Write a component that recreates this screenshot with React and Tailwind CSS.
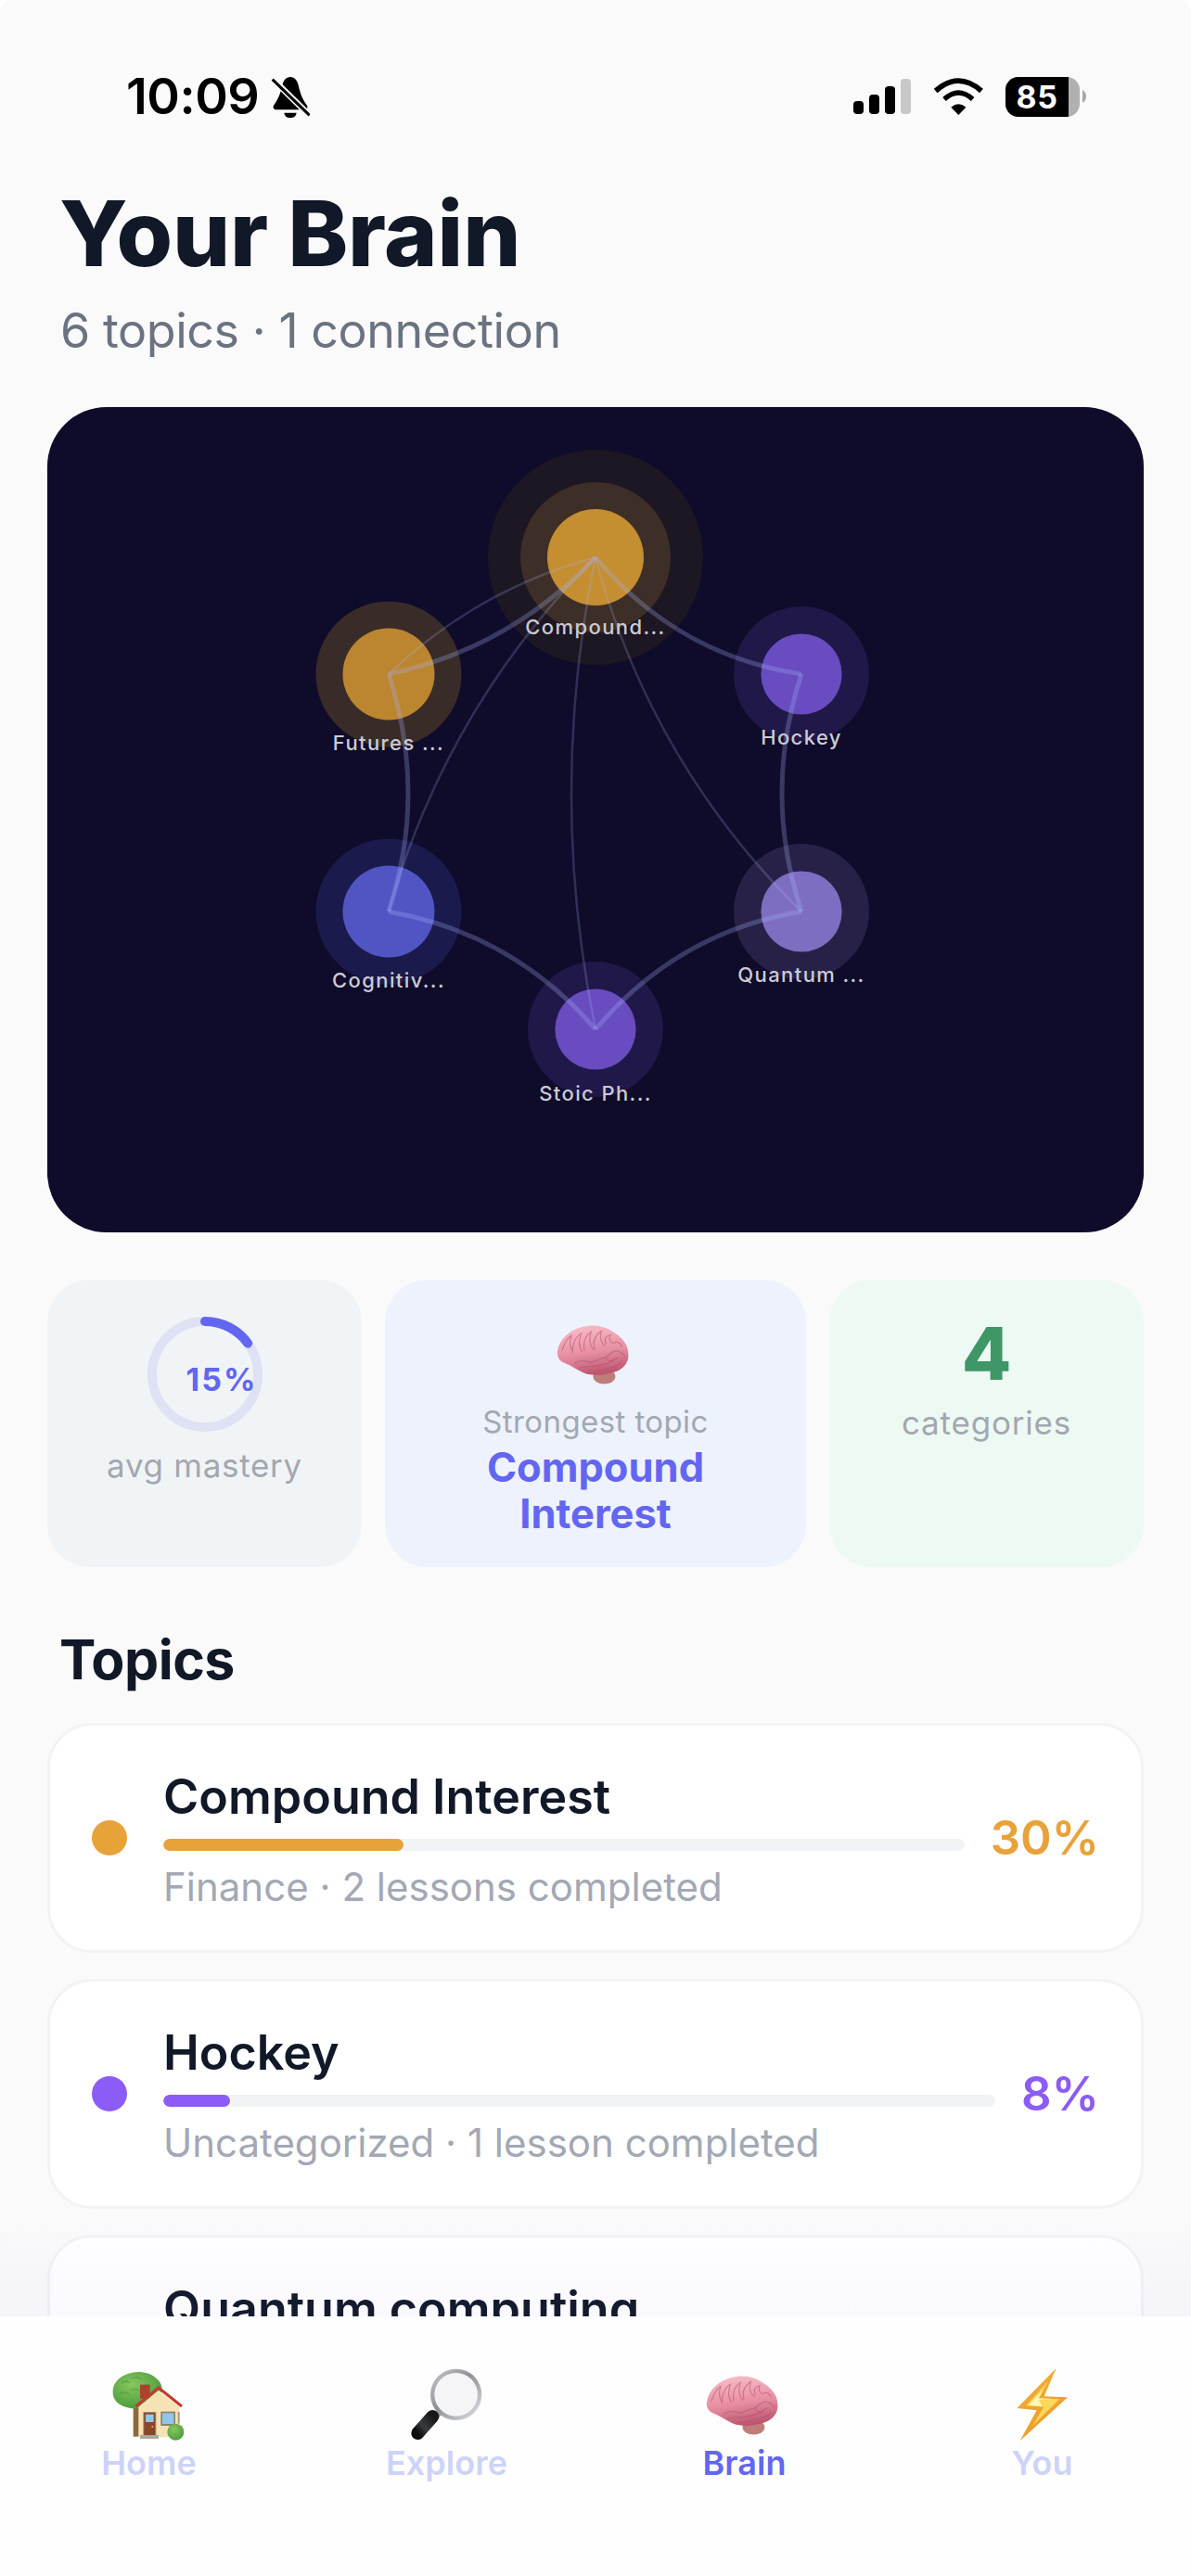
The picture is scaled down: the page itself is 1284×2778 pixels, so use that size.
import React from "react";

const NODES = [
  { x: 642, y: 601, r: 52, halo: 81, halo2: 116, fill: "#c48e31", haloFill: "#3d2f27", label: "Compound...", ly: 684 },
  { x: 419, y: 727, r: 49.5, halo: 78.5, fill: "#bc8630", haloFill: "#392c28", label: "Futures ...", ly: 809 },
  { x: 864, y: 727, r: 43.6, halo: 73, fill: "#684cc0", haloFill: "#201848", label: "Hockey", ly: 803 },
  { x: 419, y: 983, r: 49.5, halo: 78.5, fill: "#5155c4", haloFill: "#1b1a4c", label: "Cognitiv...", ly: 1065 },
  { x: 864, y: 983, r: 43.6, halo: 73, fill: "#7e6ec2", haloFill: "#282147", label: "Quantum ...", ly: 1059 },
  { x: 642, y: 1110, r: 43.6, halo: 73, fill: "#684cc0", haloFill: "#201848", label: "Stoic Ph...", ly: 1187 },
];

const THICK = [
  "M642 601 Q550 699 419 727",
  "M642 601 Q729 706 864 727",
  "M419 727 Q461 855 419 983",
  "M864 727 Q822 855 864 983",
  "M419 983 Q553 1007 642 1110",
  "M864 983 Q731 1005 642 1110",
];
const THIN = [
  "M642 601 Q514 636 419 727",
  "M642 601 Q480 765 419 983",
  "M642 601 Q590 856 642 1110",
  "M642 601 Q701 822 864 983",
];

const TOPICS = [
  { name: "Compound Interest", sub: "Finance · 2 lessons completed", pct: 30, color: "#e8a23a" },
  { name: "Hockey", sub: "Uncategorized · 1 lesson completed", pct: 8, color: "#8b5cf6" },
  { name: "Quantum computing", sub: "Uncategorized · 1 lesson completed", pct: 8, color: "#a78bfa" },
];

function Brain({ id, className }) {
  return (
    <svg viewBox="0 0 235 195" className={className}>
      <defs>
        <linearGradient id={id + "a"} x1="0.3" y1="0" x2="0.5" y2="1">
          <stop offset="0" stopColor="#f6bcc6" />
          <stop offset="0.55" stopColor="#e88fa3" />
          <stop offset="1" stopColor="#c95f78" />
        </linearGradient>
        <linearGradient id={id + "b"} x1="0.3" y1="0" x2="0.6" y2="1">
          <stop offset="0" stopColor="#ee9fb0" />
          <stop offset="1" stopColor="#b94f6b" />
        </linearGradient>
      </defs>
      <ellipse cx="155" cy="170" rx="36" ry="24" fill="#bd7d78" />
      <path d="M3 88C8 50 40 20 80 9C115 0 150 3 180 22C215 42 236 70 233 102C231 126 215 146 190 154C165 162 125 168 95 160C70 152 45 132 22 124C8 118 1 104 3 88Z" fill={`url(#${id}a)`} />
      <path d="M55 130C52 112 75 104 105 100C135 97 155 82 185 74C212 70 232 84 233 104C232 128 214 146 190 154C160 164 125 168 95 160C78 154 65 144 55 130Z" fill={`url(#${id}b)`} />
      <g fill="none" stroke="#b9506e" strokeOpacity="0.62" strokeWidth="3.2" strokeLinecap="round">
        <path d="M18 85C28 52 40 42 48 36C42 55 42 70 50 85" />
        <path d="M52 92C50 66 62 40 80 30C72 50 72 72 82 88" />
        <path d="M90 85C86 60 92 38 112 24C104 46 108 70 120 82" />
        <path d="M124 80C116 56 126 36 146 22C138 42 144 60 158 70" />
        <path d="M160 62C154 46 160 38 176 34C168 46 172 56 184 62" />
        <path d="M188 60C196 54 206 60 212 72" />
        <path d="M60 126C72 116 92 118 110 124C130 118 140 112 158 108C172 100 176 88 192 86C206 86 214 94 222 104" />
        <path d="M72 142C92 132 118 142 138 134C160 130 178 124 198 108" />
        <path d="M105 156C120 150 140 154 158 146C176 142 196 136 212 124" />
        <path d="M160 108C168 120 176 122 184 120" />
      </g>
    </svg>
  );
}

function HouseIcon() {
  return (
    <svg viewBox="45 24 240 240" className="w-[80px] h-[80px]">
      <defs>
        <radialGradient id="tree" cx="0.4" cy="0.35" r="0.7">
          <stop offset="0" stopColor="#86c760" />
          <stop offset="1" stopColor="#4a9a3a" />
        </radialGradient>
      </defs>
      <rect x="113" y="150" width="19" height="98" fill="#8a6a3a" />
      <path d="M47 100C49 68 75 52 95 45C125 33 168 39 188 60C208 76 213 100 192 125C170 148 130 162 100 155C68 150 45 132 47 100Z" fill="url(#tree)" />
      <g fill="none" stroke="#3d8430" strokeOpacity="0.6" strokeWidth="3">
        <path d="M75 75q15-12 28 0" />
        <path d="M110 60q18-10 30 4" />
        <path d="M70 110q16-12 30 2" />
        <path d="M105 100q14-12 28 0" />
        <path d="M145 85q14-8 24 4" />
      </g>
      <rect x="135" y="80" width="32" height="45" fill="#a8432f" />
      <path d="M130 152L195 98L262 152V250H130Z" fill="#f6e3b5" />
      <path d="M122 150L195 90L270 150" fill="none" stroke="#c23b2c" strokeWidth="9" />
      <rect x="145" y="168" width="42" height="76" fill="#9c8c6c" />
      <rect x="148" y="171" width="36" height="72" fill="#8b452b" />
      <rect x="153" y="176" width="26" height="25" fill="#8fc7ea" />
      <circle cx="175" cy="216" r="3" fill="#e7b548" />
      <rect x="202" y="167" width="47" height="46" fill="#8f806a" />
      <rect x="207" y="172" width="37" height="35" fill="#8fc7ea" />
      <rect x="257" y="168" width="6" height="38" fill="#a79d8b" />
      <rect x="135" y="243" width="60" height="12" fill="#aaa79f" />
      <circle cx="250" cy="233" r="27" fill="url(#tree)" />
    </svg>
  );
}

function LensIcon() {
  return (
    <svg viewBox="33 24 240 240" className="w-[80px] h-[80px]">
      <defs>
        <linearGradient id="rim" x1="0" y1="0" x2="1" y2="1">
          <stop offset="0" stopColor="#c9ccd3" />
          <stop offset="0.45" stopColor="#8f9095" />
          <stop offset="1" stopColor="#e4e7ef" />
        </linearGradient>
        <linearGradient id="handle" x1="1" y1="0" x2="0" y2="1">
          <stop offset="0" stopColor="#17181b" />
          <stop offset="0.6" stopColor="#3a3b40" />
          <stop offset="1" stopColor="#0d0d10" />
        </linearGradient>
      </defs>
      <path d="M115 170L130 182" stroke="#8f9095" strokeWidth="24" />
      <path d="M106 183L58 237" stroke="url(#handle)" strokeWidth="42" strokeLinecap="round" />
      <circle cx="182" cy="112" r="83" fill="url(#rim)" />
      <circle cx="182" cy="112" r="70" fill="#f5f5f8" />
    </svg>
  );
}

function BoltIcon() {
  return (
    <svg viewBox="39 24 240 240" className="w-[80px] h-[80px]">
      <defs>
        <linearGradient id="boltA" x1="0" y1="0" x2="0.5" y2="1">
          <stop offset="0" stopColor="#f3b23a" />
          <stop offset="1" stopColor="#ec9a28" />
        </linearGradient>
      </defs>
      <path d="M203 27L76 156L140 163L86 262L240 121L164 118Z" fill="url(#boltA)" />
      <path d="M176 70L106 148L162 152L126 214L214 127L148 124Z" fill="#ffd75a" />
      <path d="M158 100L112 146L158 150L146 128L196 127L146 124Z" fill="#fff6b8" />
    </svg>
  );
}

function Signal() {
  return (
    <svg width="62" height="38" viewBox="0 0 62 38">
      <rect x="0" y="24" width="11" height="14" rx="4" fill="#000" />
      <rect x="17" y="17" width="11" height="21" rx="4" fill="#000" />
      <rect x="34" y="8" width="11" height="30" rx="4" fill="#000" />
      <rect x="51" y="0" width="11" height="38" rx="4" fill="#c8c8c8" />
    </svg>
  );
}

function Wifi() {
  return (
    <svg width="54" height="40" viewBox="378 68 162 120">
      <path d="M386 110Q460 45 534 110" fill="none" stroke="#000" strokeWidth="17" />
      <path d="M414 137Q460 95 506 137" fill="none" stroke="#000" strokeWidth="16" />
      <path d="M436 163Q460 143 484 163L460 188Z" fill="#000" />
    </svg>
  );
}

function BellOff() {
  return (
    <svg width="42" height="45" viewBox="515 63 126 135">
      <path d="M578 66C592 66 600 78 604 92C610 120 618 140 632 158C636 166 630 172 622 172H534C526 172 520 166 524 158C538 140 546 120 552 92C556 78 564 66 578 66Z" fill="#000" />
      <path d="M558 182H598C596 194 588 198 578 198C568 198 560 194 558 182Z" fill="#000" />
      <path d="M518 70L642 192" stroke="#fafafa" strokeWidth="20" />
      <path d="M520 74L640 190" stroke="#000" strokeWidth="9" />
    </svg>
  );
}

function Graph() {
  return (
    <svg viewBox="51 439 1182 890" className="block w-full h-full">
      {NODES.map((n) => (
        <g key={n.label}>
          {n.halo2 && <circle cx={n.x} cy={n.y} r={n.halo2} fill="#1d1623" />}
          <circle cx={n.x} cy={n.y} r={n.halo} fill={n.haloFill} />
          <circle cx={n.x} cy={n.y} r={n.r} fill={n.fill} />
        </g>
      ))}
      {THICK.map((d) => (
        <path key={d} d={d} fill="none" stroke="#a5b4fc" strokeOpacity="0.28" strokeWidth="5" />
      ))}
      {THIN.map((d) => (
        <path key={d} d={d} fill="none" stroke="#a5b4fc" strokeOpacity="0.22" strokeWidth="2.5" />
      ))}
      {NODES.map((n) => (
        <text key={n.label} x={n.x} y={n.ly} textAnchor="middle" fontSize="22" fontWeight="500" letterSpacing="1.4" fill="#cbcbd3" style={{ fontFamily: "Inter, sans-serif" }}>
          {n.label}
        </text>
      ))}
    </svg>
  );
}

function Ring() {
  const c = 2 * Math.PI * 57;
  return (
    <div className="relative w-[124px] h-[124px]">
      <svg viewBox="0 0 124 124" className="w-full h-full -rotate-90">
        <circle cx="62" cy="62" r="57" fill="none" stroke="#dfe1f4" strokeWidth="10" />
        <circle cx="62" cy="62" r="57" fill="none" stroke="#6366f1" strokeWidth="10" strokeLinecap="round" strokeDasharray={`${c * 0.15} ${c}`} />
      </svg>
      <div className="absolute inset-0 flex items-center justify-center pl-[37px] pt-[10px] text-[34px] font-bold tracking-[2px] text-[#6366f1]">15%</div>
    </div>
  );
}

function TopicCard({ t }) {
  return (
    <div className="flex items-center h-[248px] shrink-0 rounded-[48px] border-[3px] border-[#f1f3f5] bg-white pl-[45px] pr-[45px]">
      <div className="w-[38px] h-[38px] rounded-full shrink-0" style={{ backgroundColor: t.color }} />
      <div className="flex-1 min-w-0 ml-[39px] pt-[4px]">
        <div className="text-[52px] leading-[62px] font-semibold text-[#111827]">{t.name}</div>
        <div className="h-[13px] mt-[14px] rounded-full bg-[#f1f4f6] overflow-hidden">
          <div className="h-full rounded-full" style={{ width: `${t.pct}%`, backgroundColor: t.color }} />
        </div>
        <div className="text-[42px] leading-[52px] mt-[13px] text-[#a3a8b4]">{t.sub}</div>
      </div>
      <div className="ml-[28px] text-[51px] font-semibold shrink-0" style={{ color: t.color }}>{t.pct}%</div>
    </div>
  );
}

function Tab({ icon, label, active }) {
  return (
    <div className="flex-1 flex flex-col items-center">
      <div className="w-[80px] h-[80px] flex items-center justify-center">{icon}</div>
      <div className={`mt-[1px] text-[36px] leading-[44px] font-semibold ${active ? "text-[#6366f1]" : "text-[#cdd3f8]"}`}>{label}</div>
    </div>
  );
}

export default function App() {
  return (
    <div className="w-[1284px] h-[2778px] overflow-hidden flex flex-col bg-white [font-family:Inter,sans-serif]">
      <main className="relative flex-1 min-h-0 overflow-hidden rounded-t-[14px] bg-[#fafafa]">
        <div className="flex items-center justify-between h-[44px] mt-[82px] pl-[136px] pr-[113px]">
          <div className="flex items-center gap-[13px]">
            <span className="text-[54px] leading-none font-semibold text-black tracking-[-0.5px]">10:09</span>
            <BellOff />
          </div>
          <div className="flex items-center">
            <Signal />
            <div className="ml-[24px]"><Wifi /></div>
            <div className="ml-[24px] flex items-center">
              <div className="relative w-[80px] h-[43px] rounded-[14px] overflow-hidden bg-[#b0b0b0]">
                <div className="w-[68px] h-full bg-black flex items-center justify-center text-[34px] font-bold text-white tracking-[0.5px]">85</div>
              </div>
              <svg width="4" height="14" viewBox="0 0 4 14" className="ml-[3px]"><path d="M0 0C3 2 4 4 4 7C4 10 3 12 0 14Z" fill="#a8a8a8" /></svg>
            </div>
          </div>
        </div>

        <h1 className="mt-[73px] pl-[64px] text-[98px] leading-[106px] font-extrabold tracking-[-0.2px] text-[#111827]">Your Brain</h1>
        <p className="mt-[22px] pl-[65px] text-[52px] leading-[60px] tracking-[-0.45px] text-[#6b7280]">6 topics · 1 connection</p>

        <div className="mt-[52px] mx-[51px] h-[890px] rounded-[64px] bg-[#0f0b2a] overflow-hidden">
          <Graph />
        </div>

        <div className="mt-[51px] mx-[51px] h-[310px] flex gap-[25px]">
          <div className="w-[339px] rounded-[46px] bg-[#f1f4f6] flex flex-col items-center pt-[40px]">
            <Ring />
            <div className="mt-[14px] text-[35px] leading-[44px] tracking-[0.7px] text-[#a3a7b0]">avg mastery</div>
          </div>
          <div className="flex-1 rounded-[46px] bg-[#eef2fd] flex flex-col items-center pt-[48px]">
            <Brain id="s" className="w-[78px] h-[65px] -translate-x-[3px]" />
            <div className="mt-[20px] text-[33px] leading-[40px] tracking-[0.4px] text-[#a3a7b0]">Strongest topic</div>
            <div className="mt-[4px] text-[43.5px] leading-[50px] font-bold text-[#6366f1] text-center">Compound<br />Interest</div>
          </div>
          <div className="w-[339px] rounded-[46px] bg-[#edfaf3] flex flex-col items-center pt-[41px]">
            <div className="text-[78px] leading-[78px] font-extrabold text-[#3f9768]">4</div>
            <div className="mt-[15px] text-[35px] leading-[40px] tracking-[0.8px] text-[#a3a7b0]">categories</div>
          </div>
        </div>

        <h2 className="mt-[65px] pl-[64px] text-[59px] leading-[70px] font-bold tracking-[-0.5px] text-[#111827]">Topics</h2>

        <div className="mt-[33px] mx-[51px] flex flex-col gap-[28px]">
          {TOPICS.map((t) => <TopicCard key={t.name} t={t} />)}
        </div>

        <div className="absolute left-0 right-0 bottom-0 h-[110px] bg-linear-to-b from-transparent to-[#6366f10a]" />
      </main>

      <nav className="h-[280px] shrink-0 bg-[#fefefe] flex pt-[55px]">
        <Tab icon={<HouseIcon />} label="Home" />
        <Tab icon={<LensIcon />} label="Explore" />
        <Tab icon={<Brain id="t" className="w-[78px] h-[65px] shrink-0 -translate-x-[3px]" />} label="Brain" active />
        <Tab icon={<BoltIcon />} label="You" />
      </nav>
    </div>
  );
}
